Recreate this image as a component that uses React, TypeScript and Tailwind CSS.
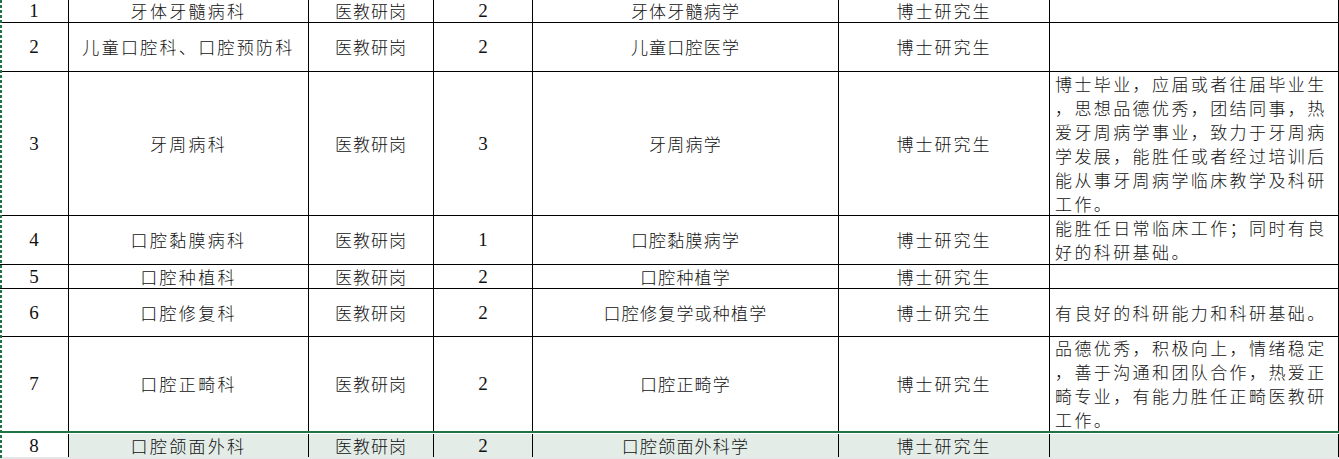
import React from "react";

const cjk = "font-['Noto_Sans_CJK_SC','Noto_Sans',sans-serif] font-light";
const serif = "font-['Liberation_Serif','Times_New_Roman',serif]";

type Row = {
  no: string;
  dept: string;
  post: string;
  count: string;
  major: string;
  degree: string;
  req: string[];
  h: string;
};

const rows: Row[] = [
  { no: "1", dept: "牙体牙髓病科", post: "医教研岗", count: "2", major: "牙体牙髓病学", degree: "博士研究生", req: [], h: "h-[23px]" },
  { no: "2", dept: "儿童口腔科、口腔预防科", post: "医教研岗", count: "2", major: "儿童口腔医学", degree: "博士研究生", req: [], h: "h-[49px]" },
  {
    no: "3",
    dept: "牙周病科",
    post: "医教研岗",
    count: "3",
    major: "牙周病学",
    degree: "博士研究生",
    req: [
      "博士毕业，应届或者往届毕业生",
      "，思想品德优秀，团结同事，热",
      "爱牙周病学事业，致力于牙周病",
      "学发展，能胜任或者经过培训后",
      "能从事牙周病学临床教学及科研",
      "工作。",
    ],
    h: "h-[144px]",
  },
  {
    no: "4",
    dept: "口腔黏膜病科",
    post: "医教研岗",
    count: "1",
    major: "口腔黏膜病学",
    degree: "博士研究生",
    req: ["能胜任日常临床工作；同时有良", "好的科研基础。"],
    h: "h-[49px]",
  },
  { no: "5", dept: "口腔种植科", post: "医教研岗", count: "2", major: "口腔种植学", degree: "博士研究生", req: [], h: "h-[24px]" },
  {
    no: "6",
    dept: "口腔修复科",
    post: "医教研岗",
    count: "2",
    major: "口腔修复学或种植学",
    degree: "博士研究生",
    req: ["有良好的科研能力和科研基础。"],
    h: "h-[48px]",
  },
  {
    no: "7",
    dept: "口腔正畸科",
    post: "医教研岗",
    count: "2",
    major: "口腔正畸学",
    degree: "博士研究生",
    req: [
      "品德优秀，积极向上，情绪稳定",
      "，善于沟通和团队合作，热爱正",
      "畸专业，有能力胜任正畸医教研",
      "工作。",
    ],
    h: "h-[94px]",
  },
];

const grid = "grid grid-cols-[69px_240px_125px_99px_306px_211px_289px]";
const cell = "border-r border-black flex items-center justify-center whitespace-nowrap overflow-hidden leading-[20px]";

function RowView({ r, last, sel }: { r: Row; last?: boolean; sel?: boolean }) {
  const bb = last ? "" : "border-b";
  const bg = sel ? "bg-[#e3ece6]" : "bg-white";
  return (
    <div className={`${grid} ${r.h}`}>
      <div className={`${cell} ${bb} bg-white ${serif} text-[19px] text-[#111]`}>{r.no}</div>
      <div className={`${cell} ${bb} ${bg} ${cjk} text-[17px] tracking-[2.3px] text-[#111]`}>{r.dept}</div>
      <div className={`${cell} ${bb} ${bg} ${cjk} text-[17px] tracking-[1px] text-[#111]`}>{r.post}</div>
      <div className={`${cell} ${bb} ${bg} ${serif} text-[19px] text-[#111]`}>{r.count}</div>
      <div className={`${cell} ${bb} ${bg} ${cjk} text-[17px] tracking-[1.2px] text-[#111]`}>{r.major}</div>
      <div className={`${cell} ${bb} ${bg} ${cjk} text-[17px] tracking-[2px] text-[#111]`}>{r.degree}</div>
      <div className={`border-r border-black ${bb} ${bg} flex flex-col justify-center pl-[5px] overflow-hidden ${cjk} text-[17px] leading-[24px] tracking-[2.4px] text-[#111]`}>
        {r.req.map((l, i) => (
          <div key={i} className="whitespace-nowrap">{l}</div>
        ))}
      </div>
    </div>
  );
}

export default function App() {
  const r8: Row = { no: "8", dept: "口腔颌面外科", post: "医教研岗", count: "2", major: "口腔颌面外科学", degree: "博士研究生", req: [], h: "h-[23px]" };
  return (
    <div className="relative w-[1339px] h-[459px] overflow-hidden bg-white">
      {rows.map((r) => (
        <RowView key={r.no} r={r} last={r.no === "7"} />
      ))}
      <div className="h-[2px] bg-[#217346]" />
      <div className="pt-[1px] bg-white">
        <RowView r={r8} last sel />
      </div>
      <div className="h-[10px] bg-[#e6e6e6]" />
      <div className="absolute left-0 top-0 bottom-0 w-[2px] bg-[repeating-linear-gradient(to_bottom,#217346_0px,#217346_3px,transparent_3px,transparent_5px)]" />
    </div>
  );
}
